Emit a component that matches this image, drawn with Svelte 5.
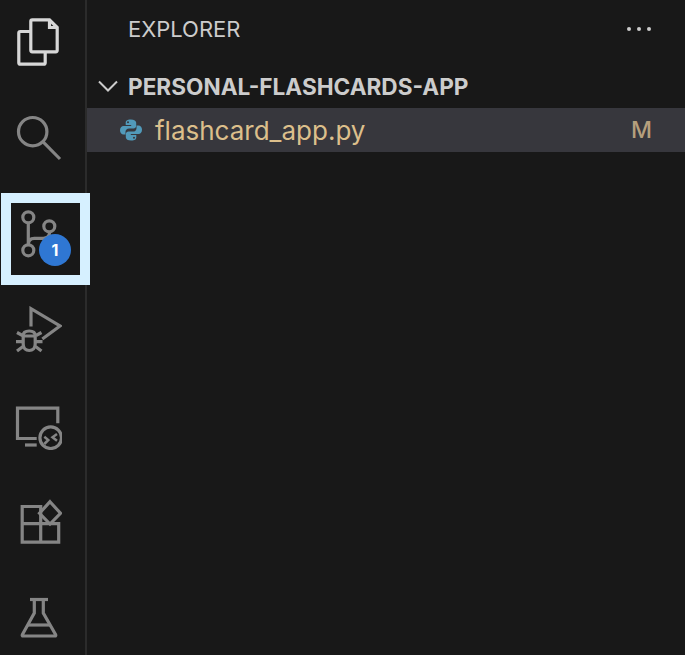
<script>
  const folderName = "PERSONAL-FLASHCARDS-APP";
</script>

<div class="window">
  <nav class="activity">
    <div class="item">
      <svg viewBox="0 0 48 48" width="48" height="48" class="light">
        <path d="M35.5 1.8H18.3a1.5 1.5 0 0 0-1.5 1.5v29a1.5 1.5 0 0 0 1.5 1.5h23.4a1.5 1.5 0 0 0 1.5-1.5V9.5z" />
        <path d="M35.5 1.8v7.7h7.7" />
        <path d="M16.8 13.5H6.3a1.5 1.5 0 0 0-1.5 1.5v29.7a1.5 1.5 0 0 0 1.5 1.5h23.4a1.5 1.5 0 0 0 1.5-1.5V33.8" />
      </svg>
    </div>
    <div class="item">
      <svg viewBox="0 0 48 48" width="48" height="48">
        <circle cx="18.7" cy="17.7" r="14.2" />
        <path d="M28.6 27.3 46 45" />
      </svg>
    </div>
    <div class="item">
      <span class="focus"></span>
      <svg viewBox="0 0 48 48" width="48" height="48">
        <circle cx="14.3" cy="7.3" r="5.5" />
        <circle cx="35.3" cy="16.3" r="5.5" />
        <circle cx="14.3" cy="40.3" r="5.5" />
        <path d="M14.3 12.8v22M14.3 34.8c0-4 2-6.5 6-6.5h9c4 0 6.3-2 6.3-6.5" />
      </svg>
      <span class="badge">1</span>
    </div>
    <div class="item">
      <svg viewBox="0 0 48 48" width="48" height="48">
        <path d="M17 20.500V2.700L46 20 28.300 33" />
        <path d="M9.200 29.500c0-3 2.400-4.500 6-4.500s6 1.500 6 4.500v8.500c0 4.300-2.600 6.500-6 6.500s-6-2.200-6-6.500z" />
        <path d="M9.200 30h12M3 26.500l5.500 3M27.500 26.500l-5.500 3M2 35.700h7M28.500 35.700h-7M3 45l6-4.500M27.500 45l-6-4.500" />
      </svg>
    </div>
    <div class="item">
      <svg viewBox="0 0 48 48" width="48" height="48">
        <path d="M43.800 21.300V6.200H3.500v30.300h19.200" />
        <path d="M11 43h11.700" />
        <circle cx="36.700" cy="35.700" r="10.800" />
        <path d="M30.300 34.700l4 3.300-4 4M43 32l-4.500 3.300 4.500 3.400" class="thin" />
      </svg>
    </div>
    <div class="item">
      <svg viewBox="0 0 48 48" width="48" height="48">
        <path d="M8.200 44.200V8.500h18.500v36.200M8.200 25.700h36.500v18.500H8.200z" />
        <path d="M36 3.700 46.500 15.300 36 26 25.500 15.300z" />
      </svg>
    </div>
    <div class="item">
      <svg viewBox="0 0 48 48" width="48" height="48">
        <path d="M16 5.500h18" />
        <path d="M20.300 5.500V19L8.300 40.800a.8.800 0 0 0 .7 1.200h32a.8.800 0 0 0 .7-1.200L29.300 19V5.500" />
        <path d="M14 31h22" />
      </svg>
    </div>
  </nav>

  <aside class="sidebar">
    <header class="title">
      <h2>EXPLORER</h2>
      <div class="dots"><i></i><i></i><i></i></div>
    </header>
    <div class="section">
      <svg class="chevron" viewBox="0 0 20 12" width="20" height="12">
        <path d="M1 1.500 10 10.500 19 1.500" />
      </svg>
      <span>{folderName}</span>
    </div>
    <div class="row">
      <svg class="py" viewBox="0 0 22 22" width="22" height="22">
        <path d="M10.800 0.500C7 0.500 5.700 1.800 5.700 3.800V6h5.500v1H3.500C1.500 7 0 8.800 0 11.200s1.500 4.300 3.500 4.300h2v-2.700c0-2 1.500-3.400 3.600-3.400h4.400c1.500 0 2.700-1.200 2.700-2.700V3.800c0-2-2-3.300-5.400-3.300zM8 2.300a1 1 0 1 1 0 2 1 1 0 0 1 0-2z" />
        <path d="M11.200 21.500c3.800 0 5.100-1.300 5.100-3.300V16h-5.500v-1h7.700c2 0 3.500-1.800 3.500-4.200S20.500 6.500 18.500 6.500h-2v2.700c0 2-1.500 3.400-3.600 3.400H8.500c-1.500 0-2.700 1.200-2.700 2.700v2.900c0 2 2 3.300 5.400 3.300zM14 19.700a1 1 0 1 1 0-2 1 1 0 0 1 0 2z" />
      </svg>
      <span class="name">flashcard_app.py</span>
      <span class="status">M</span>
    </div>
  </aside>
</div>

<style>
  :global(body) {
    background: #181818;
  }

  .window {
    display: flex;
    width: 685px;
    height: 655px;
    overflow: hidden;
    background: #181818;
    font-family: Inter, "Liberation Sans", sans-serif;
  }

  .activity {
    flex: 0 0 87px;
    box-sizing: border-box;
    display: flex;
    flex-direction: column;
    gap: 48px;
    padding: 18px 0 0 14px;
    border-right: 2px solid #2b2b2b;
  }

  .item {
    position: relative;
    width: 48px;
    height: 48px;
    flex: none;
  }

  .item svg {
    display: block;
    position: relative;
    fill: none;
    stroke: #858585;
    stroke-width: 3.200;
  }

  .item svg.light {
    stroke: #d7d7d7;
  }

  .item svg .thin {
    stroke-width: 2.500;
  }

  .focus {
    position: absolute;
    left: -13px;
    top: -17px;
    width: 89px;
    height: 92px;
    box-sizing: border-box;
    border: 10px solid #d6f0ff;
  }

  .badge {
    position: absolute;
    left: 25px;
    top: 24px;
    width: 32px;
    height: 32px;
    border-radius: 50%;
    background: #2f77d3;
    color: #fff;
    font-size: 16px;
    font-weight: 700;
    line-height: 32px;
    text-align: center;
  }

  .sidebar {
    flex: 1;
    min-width: 0;
    color: #cccccc;
  }

  .title {
    display: flex;
    align-items: center;
    justify-content: space-between;
    height: 58px;
    padding: 0 34px 0 41px;
  }

  h2 {
    margin: 0;
    font-size: 22px;
    font-weight: 400;
  }

  .dots {
    display: flex;
    gap: 6px;
  }

  .dots i {
    width: 4px;
    height: 4px;
    border-radius: 50%;
    background: #cccccc;
  }

  .section {
    display: flex;
    align-items: center;
    box-sizing: border-box;
    height: 50px;
    padding: 6px 0 0 11px;
    font-size: 22.600px;
    font-weight: 700;
  }

  .chevron {
    fill: none;
    stroke: #cccccc;
    stroke-width: 2;
    margin-right: 10px;
  }

  .row {
    display: flex;
    align-items: center;
    height: 44px;
    background: #37373d;
    padding: 0 33px;
    color: #dcbf8b;
  }

  .py {
    fill: #519aba;
    margin-right: 13px;
  }

  .name {
    flex: 1;
    font-size: 26px;
  }

  .status {
    font-size: 23px;
    font-weight: 500;
    color: #b59f7c;
  }
</style>
